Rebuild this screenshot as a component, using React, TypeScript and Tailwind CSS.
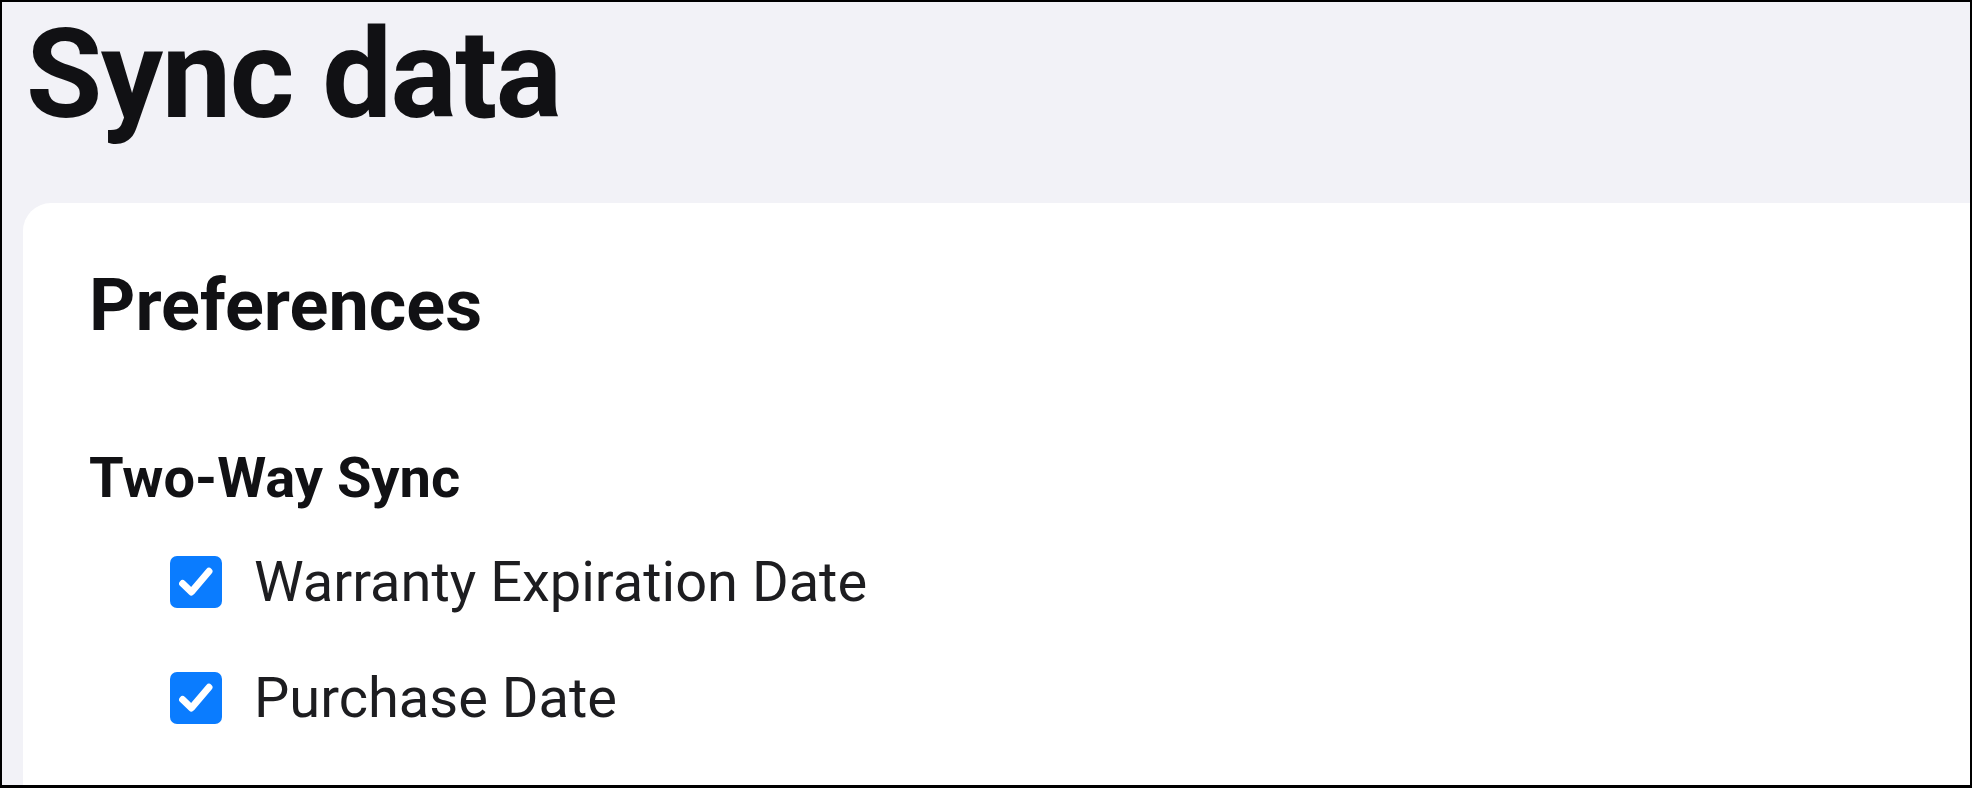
import { useState } from 'react';

type Option = { id: string; label: string };

const OPTIONS: Option[] = [
  { id: 'warranty', label: 'Warranty Expiration Date' },
  { id: 'purchase', label: 'Purchase Date' },
];

function CheckRow({ label, checked, onToggle }: { label: string; checked: boolean; onToggle: () => void }) {
  return (
    <label className="flex items-center gap-[32px] cursor-pointer">
      <button
        type="button"
        onClick={onToggle}
        className={`flex h-[52px] w-[52px] items-center justify-center rounded-[7px] ${checked ? 'bg-[#0a7cff]' : 'border-2 border-gray-400 bg-white'}`}
      >
        {checked && (
          <svg viewBox="0 0 24 24" className="h-[46px] w-[46px]" fill="none">
            <path d="M5 12.8 L9.6 17.2 L18.8 6.4" stroke="white" strokeWidth="3.6" strokeLinecap="round" strokeLinejoin="round" />
          </svg>
        )}
      </button>
      <span className="text-[56px] leading-[66px] text-[#1d1d20]">{label}</span>
    </label>
  );
}

export default function App() {
  const [checked, setChecked] = useState<Record<string, boolean>>({ warranty: true, purchase: true });

  return (
    <div
      className="flex h-[788px] w-full flex-col overflow-hidden border-2 border-b-[3px] border-black bg-[#f2f2f7]"
      style={{ fontFamily: 'Roboto, "Noto Sans", sans-serif' }}
    >
      <h1 className="pl-[24px] text-[124px] font-bold leading-[146px] tracking-[-1.5px] text-[#111114]">Sync data</h1>

      <section className="ml-[21px] mt-[55px] flex-1 rounded-tl-[28px] bg-white pl-[66px] pt-[60px]">
        <h2 className="text-[72px] font-bold leading-[86px] text-[#111114]">Preferences</h2>

        <h3 className="mt-[96px] text-[56px] font-bold leading-[66px] text-[#111114]">Two-Way Sync</h3>

        <div className="mt-[38px] flex flex-col gap-[50px] pl-[81px]">
          {OPTIONS.map((o) => (
            <CheckRow
              key={o.id}
              label={o.label}
              checked={checked[o.id]}
              onToggle={() => setChecked((c) => ({ ...c, [o.id]: !c[o.id] }))}
            />
          ))}
        </div>
      </section>
    </div>
  );
}
